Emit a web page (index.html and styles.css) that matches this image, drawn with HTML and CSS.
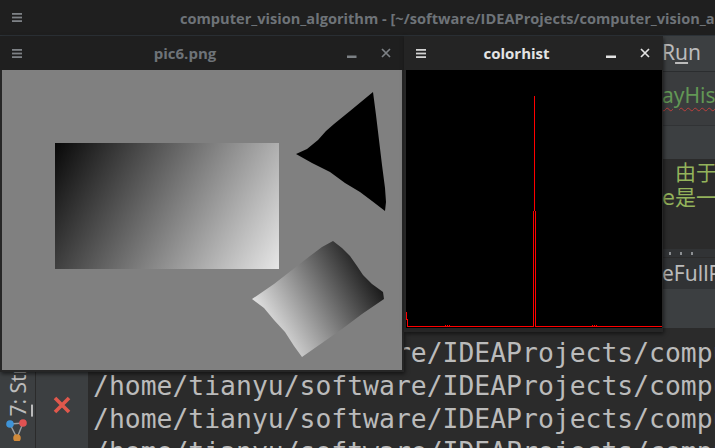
FILE: index.html
```html
<!DOCTYPE html>
<html lang="en">
<head>
<meta charset="utf-8">
<title>computer_vision_algorithm</title>
<link rel="stylesheet" href="styles.css">
</head>
<body>
<div class="desktop">
  <div class="ide">
    <header class="ide-title">
      <svg class="ham ham-dim" width="10" height="9" viewBox="0 0 10 9"><rect y="0" width="10" height="1.8"/><rect y="3.6" width="10" height="1.8"/><rect y="7.2" width="10" height="1.8"/></svg>
      <span class="ide-title-text">computer_vision_algorithm - [~/software/IDEAProjects/computer_vision_algorithm]</span>
    </header>
    <div class="ide-main">
      <div class="ide-left"></div>
      <div class="ide-right">
        <div class="menubar"><span class="menu-item">R<u>u</u>n</span></div>
        <div class="navbar"><span class="err">ayHist</span></div>
        <div class="toolbar"></div>
        <div class="editor">
          <div class="code-line comment indent">由于</div>
          <div class="code-line comment">e是一</div>
        </div>
        <div class="fold-row"><span class="dot"></span><span class="dot"></span><span class="dot"></span></div>
        <div class="run-row">eFullPath</div>
        <div class="run-rest"></div>
      </div>
    </div>
    <div class="bottom">
      <div class="tool-strip">
        <span class="vtext"><u>7</u>: Structure</span>
        <svg class="struct-icon" width="24" height="24" viewBox="0 0 24 24">
          <path d="M5 7L18 6L12 21Z" fill="none" stroke="#9a9da0" stroke-width="1.4"/>
          <circle cx="5" cy="7" r="3.8" fill="#3f94d8"/>
          <circle cx="18" cy="6" r="3.8" fill="#e05252"/>
          <circle cx="12" cy="21" r="3.8" fill="#d18a3a"/>
        </svg>
      </div>
      <div class="run-panel">
        <svg class="stop-x" width="20" height="18" viewBox="0 0 20 18"><path d="M3 2L17 16M17 2L3 16" stroke="#e0584c" stroke-width="3.6" fill="none"/></svg>
      </div>
      <pre class="console">/home/tianyu/software/IDEAProjects/computer_vision_algorithm
/home/tianyu/software/IDEAProjects/computer_vision_algorithm
/home/tianyu/software/IDEAProjects/computer_vision_algorithm
/home/tianyu/software/IDEAProjects/computer_vision_algorithm</pre>
    </div>
  </div>

  <section class="win win-pic">
    <div class="win-bar">
      <div class="win-menu"><svg class="ham ham-dim" width="10" height="9" viewBox="0 0 10 9"><rect y="0" width="10" height="1.8"/><rect y="3.6" width="10" height="1.8"/><rect y="7.2" width="10" height="1.8"/></svg></div>
      <div class="win-title">pic6.png</div>
      <div class="win-ctrls">
        <svg class="ctl" width="10" height="10" viewBox="0 0 10 10"><rect x="0" y="8" width="9" height="2"/></svg>
        <svg class="ctl" width="10" height="10" viewBox="0 0 10 10"><path d="M1 1L9 9M9 1L1 9" stroke-width="1.7" fill="none"/></svg>
      </div>
    </div>
    <div class="win-body">
      <svg class="pic" width="400" height="300" viewBox="0 0 400 300">
        <defs>
          <linearGradient id="gRect" gradientUnits="userSpaceOnUse" x1="53" y1="73" x2="275" y2="202">
            <stop offset="0" stop-color="#080808"/>
            <stop offset="1" stop-color="#e6e6e6"/>
          </linearGradient>
          <linearGradient id="gQuad" gradientUnits="userSpaceOnUse" x1="246" y1="231" x2="350" y2="171">
            <stop offset="0" stop-color="#e8e8e8"/>
            <stop offset="1" stop-color="#1c1c1c"/>
          </linearGradient>
        </defs>
        <rect width="400" height="300" fill="#808080"/>
        <rect x="53" y="73" width="224" height="126" fill="url(#gRect)"/>
        <path d="M294 84 L305 79 L316 70 L324 61 L332 54 L348 41 L371 22 L374 45 L377 70 L380 95 L383 118 L384 132 L383 141 L370 131 L358 122 L343 113 L328 102 L310 93 Z" fill="#000"/>
        <path d="M250 229 L272 214 L290 200 L308 186 L320 177 L331 171 L340 178 L348 186 L355 196 L361 205 L370 214 L381 222 L382 229 L360 244 L340 259 L320 273 L300 287 L292 276 L283 262 L272 250 L262 238 Z" fill="url(#gQuad)"/>
      </svg>
    </div>
  </section>

  <section class="win win-hist">
    <div class="win-bar">
      <div class="win-menu"><svg class="ham ham-lit" width="10" height="9" viewBox="0 0 10 9"><rect y="0" width="10" height="1.8"/><rect y="3.6" width="10" height="1.8"/><rect y="7.2" width="10" height="1.8"/></svg></div>
      <div class="win-title">colorhist</div>
      <div class="win-ctrls">
        <svg class="ctl" width="10" height="10" viewBox="0 0 10 10"><rect x="0" y="8" width="10" height="2"/></svg>
        <svg class="ctl" width="10" height="10" viewBox="0 0 10 10"><path d="M1 1L9 9M9 1L1 9" stroke-width="1.7" fill="none"/></svg>
      </div>
    </div>
    <div class="win-body">
      <svg class="hist" width="256" height="258" viewBox="0 0 256 258" shape-rendering="crispEdges">
        <rect width="256" height="258" fill="#000"/>
        <g fill="#ff0000">
          <rect x="128" y="26" width="1" height="115"/>
          <rect x="127" y="141" width="1" height="116"/>
          <rect x="129" y="141" width="1" height="116"/>
          <rect x="1" y="256" width="126" height="1"/>
          <rect x="130" y="256" width="126" height="1"/>
          <rect x="0" y="242" width="1" height="8"/>
          <rect x="1" y="249" width="1" height="8"/>
          <rect x="39" y="255" width="1" height="1"/>
          <rect x="41" y="255" width="1" height="1"/>
          <rect x="43" y="255" width="1" height="1"/>
          <rect x="186" y="255" width="1" height="1"/>
          <rect x="188" y="255" width="1" height="1"/>
          <rect x="190" y="255" width="1" height="1"/>
        </g>
      </svg>
    </div>
  </section>
</div>
</body>
</html>
```
FILE: styles.css
```css
* { box-sizing: border-box; }

html, body {
  margin: 0;
  padding: 0;
}

body {
  width: 715px;
  height: 448px;
  overflow: hidden;
  background: #2b2b2b;
  font-family: "Noto Sans", "Noto Sans CJK SC", sans-serif;
}

.desktop {
  position: relative;
  width: 715px;
  height: 448px;
  overflow: hidden;
}

/* ---------- IDE behind the windows ---------- */
.ide {
  display: flex;
  flex-direction: column;
  height: 448px;
}

.ide-title {
  flex: none;
  height: 36px;
  background: #1f1f1f;
  border-bottom: 1px solid #2c3237;
  display: flex;
  align-items: center;
  white-space: nowrap;
  overflow: hidden;
}

.ham { display: block; }
.ham-dim { fill: #7d8185; }
.ham-lit { fill: #d2d2d2; }

.ide-title .ham { margin-left: 12px; flex: none; }

.ide-title-text {
  margin-left: 158px;
  font: 700 14.6px "Open Sans", sans-serif;
  color: #6e7378;
}

.ide-main {
  flex: none;
  height: 292px;
  display: grid;
  grid-template-columns: 662px 1fr;
}

.ide-left { background: #2b2b2b; }

.ide-right {
  display: flex;
  flex-direction: column;
  overflow: hidden;
  white-space: nowrap;
  font-size: 21px;
}

.menubar {
  height: 36px;
  background: #3c3f41;
  border-bottom: 1px solid #2b2d2f;
  line-height: 32px;
  color: #bbbbbb;
}

.menu-item u { text-underline-offset: 2px; }

.navbar {
  height: 54px;
  background: #3a3c3e;
  border-bottom: 1px solid #313335;
  padding-top: 8px;
  line-height: 30px;
  color: #629755;
}

.err {
  text-decoration: underline wavy #bc3f3c;
  text-decoration-thickness: 1px;
  text-underline-offset: 4px;
}

.toolbar {
  height: 33px;
  background: #3c3f41;
}

.editor {
  height: 90px;
  background: #2b2b2b;
  padding-top: 2px;
}

.code-line {
  height: 25px;
  font-family: "DejaVu Sans", "Noto Sans CJK SC", sans-serif;
  font-size: 21px;
  line-height: 25px;
}

.comment { color: #94b35b; }
.indent { padding-left: 13px; }

.fold-row {
  height: 9px;
  background: #313335;
  border-bottom: 1px solid #2b2b2b;
  display: flex;
  gap: 9px;
  padding: 3px 0 0 7px;
}

.dot {
  width: 2px;
  height: 3px;
  background: #8c8f92;
}

.run-row {
  height: 31px;
  background: #313335;
  line-height: 31px;
  color: #bbbbbb;
}

.run-rest {
  flex: 1;
  background: #3c3f41;
}

.bottom {
  flex: 1;
  display: flex;
  min-height: 0;
}

.tool-strip {
  flex: none;
  width: 36px;
  background: #3c3f41;
  border-right: 1px solid #2b2b2b;
  display: flex;
  flex-direction: column;
  align-items: center;
  justify-content: flex-end;
  padding-bottom: 7px;
  overflow: hidden;
}

.vtext {
  writing-mode: vertical-rl;
  transform: rotate(180deg);
  font-size: 21px;
  color: #bbbbbb;
  white-space: nowrap;
  line-height: 20px;
  flex: none;
}

.vtext u { text-underline-offset: 2px; }

.struct-icon { display: block; margin-left: -2px; flex: none; }

.run-panel {
  flex: none;
  width: 52px;
  background: #3c3f41;
  display: flex;
  justify-content: center;
  padding-top: 68px;
}

.stop-x { display: block; }

.console {
  flex: 1;
  margin: 0;
  padding: 8px 0 0 5px;
  font-family: "DejaVu Sans Mono", monospace;
  font-size: 26.4px;
  line-height: 33px;
  color: #bbbbbb;
  white-space: pre;
  overflow: hidden;
}

/* ---------- floating windows ---------- */
.win {
  position: absolute;
  top: 36px;
  background: #262626;
  box-shadow: 1px 2px 4px rgba(0, 0, 0, 0.55);
}

.win-pic { left: 0; width: 404px; }
.win-hist { left: 404px; width: 259px; }

.win-bar {
  height: 34px;
  display: flex;
  align-items: center;
  background: #1f1f1f;
}

.win-hist .win-bar { background: #242424; }

.win-menu {
  width: 34px;
  display: flex;
  justify-content: center;
}

.win-title {
  flex: 1;
  text-align: center;
  font: 700 15px "Open Sans", sans-serif;
  color: #6e7378;
  white-space: nowrap;
}

.win-hist .win-title { color: #e4e4e4; }

.win-ctrls {
  width: 68px;
  display: flex;
  align-items: center;
  gap: 24px;
  padding-left: 11px;
}

.ctl { display: block; }
.win-pic .ctl { fill: #7d8185; stroke: #7d8185; }
.win-hist .ctl { fill: #e2e2e2; stroke: #e2e2e2; }

.win-pic .win-body { padding: 0 2px 2px 2px; }
.win-hist .win-body { padding: 0 1px 4px 2px; }

.pic, .hist { display: block; }
```
